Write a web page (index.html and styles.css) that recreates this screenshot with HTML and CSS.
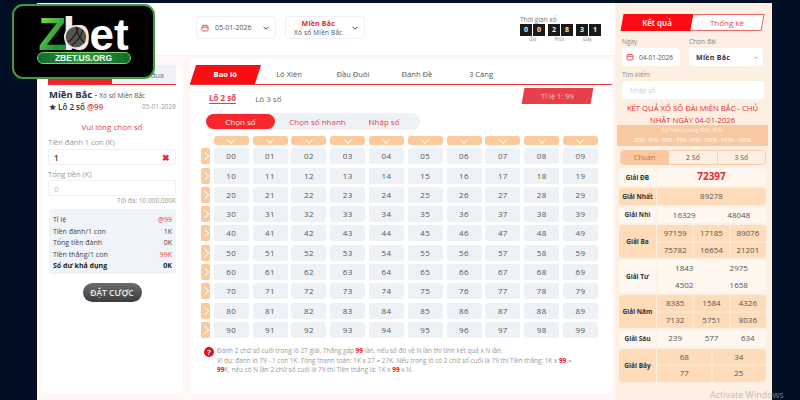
FILE: index.html
```html
<!DOCTYPE html>
<html lang="vi">
<head>
    <meta charset="UTF-8">
    <meta name="viewport" content="width=device-width, initial-scale=1.0">
    <title>Xổ số Miền Bắc</title>
    <link rel="stylesheet" href="styles.css">
</head>
<body>
    <div class="logo">
        <div class="logo-word">
            <span class="logo-z">Z</span><span class="logo-b">b<svg class="logo-ball" viewBox="0 0 28 28"><circle cx="14" cy="14" r="13" fill="#57534e" stroke="#e8e8e8" stroke-width="2"/><path d="M5 20Q13 14 17 3M9 24Q19 17 22 6M14 2Q16 14 24 21" fill="none" stroke="#1d1b1a" stroke-width="1.4"/></svg></span><span class="logo-et">et</span>
        </div>
        <div class="logo-site">ZBET.US.ORG</div>
    </div>

    <div class="page">
        <div class="left-area">
            <div class="top-bar">
                <div class="select-box date-select">
                    <svg class="cal-icon" viewBox="0 0 12 12"><rect x="1.5" y="2.5" width="9" height="8" rx="1.5" fill="none" stroke="#e8404a" stroke-width="1.3"/><path d="M1.5 5h9M4 1v2M8 1v2" stroke="#e8404a" stroke-width="1.3"/></svg>
                    <span class="date-text">05-01-2026</span>
                    <svg class="chevron" viewBox="0 0 10 6"><path d="M1 1l4 4 4-4" fill="none" stroke="#333" stroke-width="1.5"/></svg>
                </div>
                <div class="select-box region-select">
                    <div class="region-text">
                        <b>Miền Bắc</b>
                        <span>Xổ số Miền Bắc</span>
                    </div>
                    <svg class="chevron" viewBox="0 0 10 6"><path d="M1 1l4 4 4-4" fill="none" stroke="#333" stroke-width="1.5"/></svg>
                </div>
                <div class="countdown">
                    <div class="countdown-title">Thời gian xổ</div>
                    <div class="countdown-digits">
                        <div class="digit-group"><span>0</span><span>0</span></div>
                        <div class="digit-group"><span>2</span><span>8</span></div>
                        <div class="digit-group"><span>3</span><span>1</span></div>
                    </div>
                    <div class="countdown-units">
                        <span>Giờ</span><span>Phút</span><span>Giây</span>
                    </div>
                </div>
            </div>

            <div class="content">
                <div class="bet-card">
                    <div class="bet-tabs">
                        <div class="bet-tab active"></div>
                        <div class="bet-tab">Lịch sử đua</div>
                    </div>
                    <div class="bet-title"><b>Miền Bắc</b> - <span>Xổ số Miền Bắc</span></div>
                    <div class="bet-sub">
                        <span class="bet-type">★ Lô 2 số <em>@99</em></span>
                        <span class="bet-date">05-01-2026</span>
                    </div>
                    <div class="bet-warning">Vui lòng chọn số</div>
                    <label class="bet-label">Tiền đánh 1 con (K)</label>
                    <div class="bet-input strong">1<span class="clear-x">✖</span></div>
                    <label class="bet-label">Tổng tiền (K)</label>
                    <div class="bet-input muted">0</div>
                    <div class="bet-max">Tối đa: 10.000.000K</div>
                    <div class="summary">
                        <div class="summary-row"><span>Tỉ lệ</span><span class="red">@99</span></div>
                        <div class="summary-row"><span>Tiền đánh/1 con</span><span>1K</span></div>
                        <div class="summary-row"><span>Tổng tiền đánh</span><span>0K</span></div>
                        <div class="summary-row"><span>Tiền thắng/1 con</span><span class="red">99K</span></div>
                        <div class="summary-row total"><span>Số dư khả dụng</span><span>0K</span></div>
                    </div>
                    <button class="bet-button">ĐẶT CƯỢC</button>
                </div>

                <div class="main-card">
                    <div class="game-tabs">
                        <div class="game-tab active"><span>Bao lô</span></div>
                        <div class="game-tab">Lô Xiên</div>
                        <div class="game-tab">Đầu Đuôi</div>
                        <div class="game-tab">Đánh Đề</div>
                        <div class="game-tab">3 Càng</div>
                    </div>
                    <div class="sub-row">
                        <span class="sub-tab active">Lô 2 số</span>
                        <span class="sub-tab">Lô 3 số</span>
                        <div class="rate-badge"><span>Tỉ lệ 1: 99</span></div>
                    </div>
                    <div class="mode-pill">
                        <span class="mode active">Chọn số</span>
                        <span class="mode quick">Chọn số nhanh</span>
                        <span class="mode input">Nhập số</span>
                    </div>
                    <div class="number-grid">
                        <i></i><u></u><u></u><u></u><u></u><u></u><u></u><u></u><u></u><u></u><u></u>
                        <s></s><div>00</div><div>01</div><div>02</div><div>03</div><div>04</div><div>05</div><div>06</div><div>07</div><div>08</div><div>09</div>
                        <s></s><div>10</div><div>11</div><div>12</div><div>13</div><div>14</div><div>15</div><div>16</div><div>17</div><div>18</div><div>19</div>
                        <s></s><div>20</div><div>21</div><div>22</div><div>23</div><div>24</div><div>25</div><div>26</div><div>27</div><div>28</div><div>29</div>
                        <s></s><div>30</div><div>31</div><div>32</div><div>33</div><div>34</div><div>35</div><div>36</div><div>37</div><div>38</div><div>39</div>
                        <s></s><div>40</div><div>41</div><div>42</div><div>43</div><div>44</div><div>45</div><div>46</div><div>47</div><div>48</div><div>49</div>
                        <s></s><div>50</div><div>51</div><div>52</div><div>53</div><div>54</div><div>55</div><div>56</div><div>57</div><div>58</div><div>59</div>
                        <s></s><div>60</div><div>61</div><div>62</div><div>63</div><div>64</div><div>65</div><div>66</div><div>67</div><div>68</div><div>69</div>
                        <s></s><div>70</div><div>71</div><div>72</div><div>73</div><div>74</div><div>75</div><div>76</div><div>77</div><div>78</div><div>79</div>
                        <s></s><div>80</div><div>81</div><div>82</div><div>83</div><div>84</div><div>85</div><div>86</div><div>87</div><div>88</div><div>89</div>
                        <s></s><div>90</div><div>91</div><div>92</div><div>93</div><div>94</div><div>95</div><div>96</div><div>97</div><div>98</div><div>99</div>
                    </div>
                    <div class="help">
                        <span class="help-icon">?</span>
                        <p>Đánh 2 chữ số cuối trong lô 27 giải. Thắng gấp <b>99</b> lần, nếu số đó về N lần thì tính kết quả x N lần.<br>
                        Ví dụ: đánh lô 79 - 1 con 1K. Tổng thanh toán: 1K x 27 = 27K. Nếu trong lô có 2 chữ số cuối là 79 thì Tiền thắng: 1K x <b>99</b> =<br>
                        <b>99</b>K, nếu có N lần 2 chữ số cuối là 79 thì Tiền thắng là: 1K x <b>99</b> x N.</p>
                    </div>
                </div>
            </div>
        </div>

        <div class="result-panel">
            <div class="result-tabs">
                <div class="result-tab active"><span>Kết quả</span></div>
                <div class="result-tab"><span>Thống kê</span></div>
            </div>
            <div class="filter-row">
                <div class="filter">
                    <label>Ngày</label>
                    <div class="filter-box date-box">
                        <svg class="cal-icon" viewBox="0 0 12 12"><rect x="1.5" y="2.5" width="9" height="8" rx="1.5" fill="none" stroke="#e8404a" stroke-width="1.3"/><path d="M1.5 5h9M4 1v2M8 1v2" stroke="#e8404a" stroke-width="1.3"/></svg>
                        04-01-2026
                    </div>
                </div>
                <div class="filter wide">
                    <label>Chọn đài</label>
                    <div class="filter-box region-box"><b>Miền Bắc</b><svg class="tiny-chevron" viewBox="0 0 10 6"><path d="M1 1l4 4 4-4" fill="none" stroke="#e8404a" stroke-width="1.6"/></svg></div>
                </div>
            </div>
            <label class="search-label">Tìm kiếm</label>
            <div class="filter-box search-box">Nhập số</div>
            <h2 class="result-title">KẾT QUẢ XỔ SỐ ĐÀI MIỀN BẮC - CHỦ NHẬT NGÀY 04-01-2026</h2>
            <div class="code-banner">
                <div>Ký hiệu trúng Đặc Biệt</div>
                <div class="codes">2TN - 4TN - 5TN - 7TN - 9TN - 10TN - 11TN - 15TN</div>
            </div>
            <div class="digit-tabs">
                <span class="active">Chuẩn</span><span>2 Số</span><span>3 Số</span>
            </div>
            <div class="prizes">
                <div class="prize">
                    <div class="prize-name">Giải ĐB</div>
                    <div class="prize-values cols-1"><div class="jackpot">72397</div></div>
                </div>
                <div class="prize even">
                    <div class="prize-name">Giải Nhất</div>
                    <div class="prize-values cols-1"><div>89278</div></div>
                </div>
                <div class="prize">
                    <div class="prize-name">Giải Nhì</div>
                    <div class="prize-values cols-2"><div>16329</div><div>48048</div></div>
                </div>
                <div class="prize even">
                    <div class="prize-name">Giải Ba</div>
                    <div class="prize-values cols-3"><div>97159</div><div>17185</div><div>89076</div><div>75782</div><div>16654</div><div>21201</div></div>
                </div>
                <div class="prize">
                    <div class="prize-name">Giải Tư</div>
                    <div class="prize-values cols-2"><div>1843</div><div>2975</div><div>4502</div><div>1658</div></div>
                </div>
                <div class="prize even">
                    <div class="prize-name">Giải Năm</div>
                    <div class="prize-values cols-3"><div>8385</div><div>1584</div><div>4326</div><div>7132</div><div>5751</div><div>8036</div></div>
                </div>
                <div class="prize">
                    <div class="prize-name">Giải Sáu</div>
                    <div class="prize-values cols-3"><div>239</div><div>577</div><div>634</div></div>
                </div>
                <div class="prize even">
                    <div class="prize-name">Giải Bảy</div>
                    <div class="prize-values cols-2"><div>68</div><div>34</div><div>77</div><div>25</div></div>
                </div>
            </div>
        </div>
    </div>

    <div class="activate">Activate Windows</div>
</body>
</html>
```

FILE: styles.css
```css
* {
    box-sizing: border-box;
}
body {
    margin: 0;
    width: 800px;
    height: 400px;
    overflow: hidden;
    background-color: #020e24;
    font-family: "Open Sans", "Noto Sans", sans-serif;
    color: #555;
}

/* logo sits over the page corner */
.logo {
    position: absolute;
    left: 12px;
    top: 4px;
    width: 143px;
    height: 75px;
    background: #000;
    border: 2px solid #3f9a44;
    border-radius: 11px;
    display: flex;
    flex-direction: column;
    align-items: center;
    padding-top: 11px;
    z-index: 5;
}
.logo-word {
    display: flex;
    align-items: baseline;
    height: 34px;
    font-family: "Liberation Sans", sans-serif;
    font-weight: 700;
    line-height: 34px;
}
.logo-z {
    font-size: 46px;
    background: linear-gradient(120deg, #8ddc4a, #1f9a3a 70%);
    -webkit-background-clip: text;
    background-clip: text;
    color: transparent;
}
.logo-b {
    position: relative;
    font-size: 46px;
    color: #eee;
    margin-left: -4px;
}
.logo-ball {
    position: absolute;
    left: 2px;
    top: 8px;
    width: 24px;
    height: 24px;
}
.logo-et {
    font-size: 44px;
    color: #fff;
    margin-left: -1px;
}
.logo-site {
    margin-top: 1px;
    width: 94px;
    height: 12px;
    line-height: 10px;
    border-radius: 6px;
    border: 1px solid #7ccf6a;
    background: linear-gradient(90deg, #0f6b2a, #2e9a3e 50%, #0f6b2a);
    color: #fff;
    font-family: "Liberation Sans", sans-serif;
    font-size: 8.5px;
    font-weight: 700;
    text-align: center;
}

.page {
    display: flex;
    width: 735px;
    height: 397px;
    margin: 3px 0 0 37px;
    background: #fff;
}
.left-area {
    width: 578px;
    display: flex;
    flex-direction: column;
    background: #fff6f6;
}

/* top bar */
.top-bar {
    height: 52px;
    flex: none;
    display: flex;
    background: #fff;
    padding: 13px 0 0 159px;
}
.select-box {
    width: 80px;
    height: 23px;
    background: #fff;
    border: 1px solid #f0f0f3;
    border-radius: 3px;
    display: flex;
    align-items: center;
}
.date-select {
    padding: 0 6px 0 4px;
}
.region-select {
    margin-left: 9px;
    padding: 0 6px 0 8px;
}
.cal-icon {
    width: 8px;
    height: 8px;
    flex: none;
}
.date-text {
    margin-left: 6px;
    font-size: 7px;
    color: #555;
}
.chevron {
    width: 6px;
    height: 4px;
    margin-left: auto;
}
.region-text {
    display: flex;
    flex-direction: column;
    align-items: center;
    font-size: 6.5px;
    line-height: 9px;
    letter-spacing: 0.2px;
}
.region-text b {
    color: #e8252e;
    font-size: 7px;
}
.countdown {
    margin-left: 155px;
    margin-top: -1px;
    width: 81px;
}
.countdown-title {
    font-size: 6.5px;
    line-height: 9px;
    color: #777;
}
.countdown-digits {
    display: flex;
    justify-content: space-between;
    margin-top: 0;
}
.digit-group {
    display: flex;
    gap: 1px;
}
.digit-group span {
    width: 12px;
    height: 12px;
    background: #1a1a1a;
    color: #eee;
    font-size: 7px;
    font-weight: 700;
    line-height: 12px;
    text-align: center;
}
.countdown-units {
    display: flex;
    justify-content: space-around;
    margin-top: 0;
    font-size: 4.5px;
    color: #888;
}

/* content */
.content {
    flex: 1;
    display: flex;
    gap: 8px;
    padding: 3px 3px 7px 5px;
    border-top: 1px solid #ffeeee;
}

/* bet card */
.bet-card {
    width: 140px;
    margin-top: 6px;
    background: #fff;
    padding: 0 6px;
    display: flex;
    flex-direction: column;
}
.bet-tabs {
    display: flex;
    flex: none;
    height: 20px;
    border-bottom: 1.5px solid #f0353d;
}
.bet-tab {
    flex: 1;
    background: #eef2f7;
    font-size: 7.5px;
    line-height: 20px;
    text-align: right;
    padding-right: 12px;
    color: #777;
    white-space: nowrap;
    overflow: hidden;
}
.bet-tab.active {
    background: #f0252c;
}
.bet-title {
    height: 12px;
    margin: 4px 0 0 1px;
    font-size: 8.5px;
    line-height: 12px;
    color: #222;
}
.bet-title b {
    font-size: 9.5px;
    color: #28304a;
}
.bet-title span {
    font-size: 6.5px;
    color: #555;
}
.bet-sub {
    display: flex;
    justify-content: space-between;
    align-items: center;
    height: 12px;
    margin: 0 0 0 1px;
    line-height: 12px;
}
.bet-type {
    font-size: 8px;
    font-weight: 600;
    color: #2c3140;
}
.bet-type em {
    font-style: normal;
    color: #e8404a;
}
.bet-date {
    font-size: 6.5px;
    color: #999;
}
.bet-warning {
    margin-top: 8px;
    text-align: center;
    font-size: 8px;
    line-height: 12px;
    color: #e8404a;
}
.bet-label {
    margin-top: 3px;
    font-size: 7.5px;
    line-height: 12px;
    color: #999;
}
.bet-input {
    display: flex;
    flex: none;
    justify-content: space-between;
    align-items: center;
    height: 16px;
    margin-top: 1px;
    padding: 0 5px;
    border: 1px solid #f0f1f4;
    border-radius: 2px;
    font-size: 8px;
}
.bet-input.strong {
    color: #333;
    font-weight: 600;
}
.bet-input.muted {
    margin-top: 0;
    color: #bbb;
}
.clear-x {
    color: #e8252e;
    font-size: 9px;
}
.bet-max {
    height: 10px;
    margin-top: 0;
    text-align: right;
    font-size: 6.5px;
    line-height: 10px;
    color: #999;
}
.summary {
    flex: none;
    margin: 3px 0 0 1px;
    height: 65px;
    padding: 5px 4px 3px;
    background: #f0f3f8;
    border-radius: 3px;
}
.summary-row {
    display: flex;
    justify-content: space-between;
    font-size: 7px;
    line-height: 11.5px;
    color: #444;
}
.summary-row .red {
    color: #e8404a;
}
.summary-row.total {
    font-weight: 700;
    color: #222;
}
.bet-button {
    flex: none;
    align-self: center;
    margin-top: 9px;
    width: 59px;
    height: 19px;
    padding: 0;
    border: none;
    border-radius: 10px;
    background: linear-gradient(#6c6c6c, #3c3c3c);
    color: #eee;
    font-family: inherit;
    font-size: 8.5px;
    font-weight: 600;
}

/* main card */
.main-card {
    flex: 1;
    background: #fff;
    padding-top: 6px;
}
.game-tabs {
    display: flex;
    height: 20px;
    border-bottom: 1px solid #f0353d;
    font-size: 7.6px;
}
.game-tab {
    width: 64px;
    text-align: center;
    line-height: 19px;
    color: #555;
}
.game-tab.active {
    width: 64.5px;
    margin-left: 3px;
    margin-right: -0.5px;
    background: #fa0e14;
    transform: skewX(-18deg);
    color: #fff;
    font-weight: 700;
}
.game-tab.active span {
    display: block;
    transform: skewX(18deg);
}
.sub-row {
    display: flex;
    align-items: center;
    height: 22px;
    padding: 4px 20px 0 19px;
    font-size: 8px;
}
.sub-tab {
    margin-right: 19px;
    color: #666;
}
.sub-tab.active {
    color: #e8404a;
    font-weight: 700;
    border-bottom: 1px solid #e8404a;
    line-height: 10px;
}
.rate-badge {
    align-self: flex-start;
    margin-left: auto;
    margin-top: -1px;
    width: 69px;
    height: 16px;
    background: #e8404a;
    transform: skewX(-10deg);
    color: #f7c4c4;
    font-size: 7.5px;
    line-height: 16px;
    text-align: center;
}
.rate-badge span {
    display: block;
    transform: skewX(10deg);
}
.mode-pill {
    display: flex;
    align-items: center;
    width: 214px;
    height: 17px;
    margin: 6px 0 0 16px;
    background: #eef2f7;
    border-radius: 8px;
    font-size: 8px;
    color: #e8404a;
}
.mode {
    text-align: center;
}
.mode.active {
    width: 69px;
    line-height: 15px;
    background: #f8262d;
    color: #fff;
    border-radius: 8px;
}
.mode.quick {
    width: 77px;
    margin-left: 4px;
}
.mode.input {
    width: 46px;
    margin-left: 5px;
}
.number-grid {
    display: grid;
    grid-template-columns: 9px repeat(10, 35px);
    grid-auto-rows: 16px;
    grid-template-rows: 9px;
    gap: 3.3px 3.8px;
    margin: 6px 0 0 11px;
}
.number-grid div {
    background: #eef2f7;
    border-radius: 2px;
    font-size: 8px;
    line-height: 16px;
    text-align: center;
    letter-spacing: 0.4px;
    color: #555;
}
.number-grid u {
    position: relative;
    background: #fbc99b;
    border-radius: 3px;
}
.number-grid u::after {
    content: "";
    position: absolute;
    left: 14.5px;
    top: 0.5px;
    width: 5px;
    height: 5px;
    border: solid #fff;
    border-width: 0 1px 1px 0;
    transform: rotate(45deg) scale(0.9);
}
.number-grid s {
    position: relative;
    background: #fbc99b;
    border-radius: 2px;
}
.number-grid s::after {
    content: "";
    position: absolute;
    left: 0.5px;
    top: 5px;
    width: 5px;
    height: 5px;
    border: solid #fff;
    border-width: 1px 1px 0 0;
    transform: rotate(45deg);
}
.help {
    display: flex;
    margin: 8px 0 0 14px;
}
.help-icon {
    flex: none;
    width: 10px;
    height: 10px;
    margin-top: 1px;
    background: #e8101a;
    border-radius: 50%;
    color: #fff;
    font-size: 7.5px;
    font-weight: 700;
    line-height: 10px;
    text-align: center;
}
.help p {
    margin: 0 0 0 3px;
    font-size: 6.4px;
    line-height: 9.7px;
    color: #999;
    white-space: nowrap;
}
.help b {
    color: #e8101a;
}

/* results */
.result-panel {
    flex: 1;
    background: #fdf0e2;
    padding: 11px 6px 0 3px;
    border-left: 1px solid #fbf3ea;
}
.result-tabs {
    display: flex;
    height: 17px;
    margin: 0 3px 0 3px;
    font-size: 8px;
    text-align: center;
    line-height: 17px;
}
.result-tab {
    flex: 1;
    transform: skewX(-10deg);
}
.result-tab span {
    display: block;
    transform: skewX(10deg);
}
.result-tab.active {
    background: #fa0e14;
    color: #fff;
    font-weight: 600;
}
.result-tab:not(.active) {
    background: #fff;
    border: 1px solid #f0686c;
    border-left: none;
    line-height: 15px;
    color: #e8404a;
}
.filter-row {
    display: flex;
    gap: 9px;
    margin: 6px 2px 0 3px;
}
.filter {
    width: 58px;
}
.filter.wide {
    width: 74px;
}
.filter label,
.search-label {
    display: block;
    font-size: 6.5px;
    line-height: 9px;
    color: #888;
}
.filter-box {
    display: flex;
    align-items: center;
    height: 18px;
    margin-top: 2px;
    background: #fff;
    border-radius: 2px;
    font-size: 6.5px;
    color: #555;
}
.date-box {
    gap: 5px;
    padding-left: 4px;
}
.region-box {
    justify-content: space-between;
    padding: 0 5px 0 7px;
    color: #333;
    letter-spacing: 0.3px;
    font-size: 7px;
}
.tiny-chevron {
    width: 4px;
    height: 3px;
}
.search-label {
    margin: 4px 0 0 3px;
}
.search-box {
    margin: 2px 2px 0 3px;
    padding-left: 8px;
    color: #ccc;
}
.result-title {
    margin: 3px 0 0;
    color: #e8252e;
    font-size: 7.7px;
    font-weight: 400;
    line-height: 12px;
    text-align: center;
}
.code-banner {
    height: 21px;
    margin: -1px -2px 0;
    background: #f8c9a0;
    color: #fdf0e2;
    font-size: 6px;
    line-height: 10px;
    text-align: center;
}
.codes {
    font-size: 5px;
    font-weight: 700;
    white-space: nowrap;
}
.digit-tabs {
    display: flex;
    height: 15px;
    margin: 4px 0 0 1px;
    border: 1px solid #f9cfa8;
    border-radius: 4px;
    overflow: hidden;
    font-size: 7px;
    line-height: 13px;
    text-align: center;
    color: #555;
}
.digit-tabs span {
    flex: 1;
    border-left: 1px solid #f9cfa8;
}
.digit-tabs span.active {
    border-left: none;
    background: #f8c9a0;
    color: #d9651f;
}
.prizes {
    display: flex;
    flex-direction: column;
    gap: 2px;
    margin: 3px 0 0 0;
}
.prize {
    display: flex;
    border-radius: 3px;
    overflow: hidden;
    background: #fdf7f0;
}
.prize.even {
    background: #fedcba;
}
.prize-name {
    flex: none;
    width: 37px;
    display: flex;
    align-items: center;
    justify-content: center;
    font-size: 6.5px;
    font-weight: 700;
    color: #333;
    white-space: nowrap;
}
.prize-values {
    flex: 1;
    display: grid;
    border-left: 1px solid #fdf0e2;
}
.prize-values.cols-1 {
    grid-template-columns: 1fr;
}
.prize-values.cols-2 {
    grid-template-columns: 1fr 1fr;
}
.prize-values.cols-3 {
    grid-template-columns: 1fr 1fr 1fr;
}
.prize-values div {
    height: 16.5px;
    font-size: 8px;
    line-height: 16.5px;
    text-align: center;
    color: #555;
    box-shadow: 0 0 0 0.5px rgba(253, 240, 226, 0.8);
}
.prize-values .jackpot {
    height: 18px;
    color: #e8252e;
    font-size: 10px;
    font-weight: 700;
}

.activate {
    position: absolute;
    left: 710px;
    top: 389px;
    font-family: "Open Sans", sans-serif;
    font-size: 9px;
    line-height: 11px;
    color: rgba(160, 165, 175, 0.75);
}
```
